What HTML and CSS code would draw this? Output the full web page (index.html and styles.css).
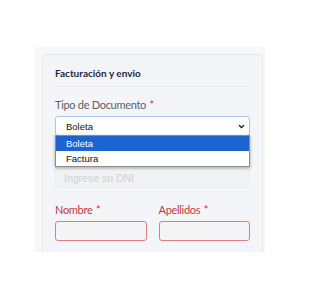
FILE: index.html
```html
<!DOCTYPE html>
<html lang="es">
<head>
<meta charset="utf-8">
<link rel="stylesheet" href="styles.css">
</head>
<body>
<div class="wrap">
  <div class="card">
    <h3 class="title">Facturación y envio</h3>
    <hr class="divider">
    <label class="label">Tipo de Documento <span class="req">*</span></label>
    <div class="select-box">
      <div class="select">
        <span>Boleta</span>
        <svg class="chev" width="7" height="5" viewBox="0 0 7 5"><path d="M1 1.2 L3.5 3.6 L6 1.2" fill="none" stroke="#222" stroke-width="1.4"/></svg>
      </div>
      <ul class="menu">
        <li class="opt active">Boleta</li>
        <li class="opt">Factura</li>
      </ul>
    </div>
    <div class="input disabled">Ingrese su DNI</div>
    <div class="row">
      <div class="col">
        <label class="label err">Nombre <span class="req">*</span></label>
        <div class="input invalid"></div>
      </div>
      <div class="col">
        <label class="label err">Apellidos <span class="req">*</span></label>
        <div class="input invalid"></div>
      </div>
    </div>
  </div>
</div>
</body>
</html>
```
FILE: styles.css
```css
html, body { margin: 0; padding: 0; background: #fff; }
body { font-family: "Lato", "Open Sans", sans-serif; }
.wrap {
  margin: 47px 0 0 35px;
  width: 230px;
  height: 205px;
  background: #f6f7f9;
  padding: 7px 0 0 7px;
  box-sizing: border-box;
  overflow: hidden;
}
.card {
  width: 221px;
  box-sizing: border-box;
  border: 1px solid #e4e6ec;
  border-radius: 4px;
  background: #f4f5f9;
  padding: 11px 12px 20px 12px;
  height: 230px;
}
.title {
  margin: 0;
  font-size: 10px;
  line-height: 14px;
  font-weight: 700;
  color: #1d2742;
}
.divider {
  border: 0;
  border-top: 1px solid #e3e5ea;
  margin: 6px 0 0 0;
}
.label {
  display: block;
  font-size: 11px;
  line-height: 16px;
  letter-spacing: -0.3px;
  color: #5d5f66;
  margin-top: 10px;
}
.req { color: #e3262c; letter-spacing: 0; margin-left: 1px; }
.label.err { color: #c0393d; }
.select-box { position: relative; margin-top: 3px; }
.select {
  height: 20px;
  box-sizing: border-box;
  border: 1px solid #a9c6ee;
  border-radius: 3px;
  background: #fff;
  display: flex;
  align-items: center;
  justify-content: space-between;
  padding: 0 4px 0 10px;
  font-family: "Liberation Sans", Arial, sans-serif;
  font-size: 9.5px;
  color: #111;
}
.chev { margin-top: 1px; }
.menu {
  position: absolute;
  left: 0;
  right: 0;
  top: 19px;
  margin: 0;
  padding: 0;
  list-style: none;
  background: #fff;
  border: 1px solid #8d8d8d;
  box-shadow: 0 1px 3px rgba(0,0,0,0.35);
  font-family: "Liberation Sans", Arial, sans-serif;
  font-size: 9.5px;
  z-index: 2;
}
.opt {
  height: 15px;
  line-height: 15px;
  padding-left: 10px;
  color: #111;
}
.opt.active { background: #1c65d1; color: #fff; }
.input {
  height: 20px;
  box-sizing: border-box;
  border-radius: 3px;
}
.disabled {
  margin-top: 32px;
  border: 1px solid #ecedf0;
  background: #f1f2f4;
  color: #d0d0d3;
  font-family: "Liberation Sans", Arial, sans-serif;
  font-size: 10.5px;
  line-height: 18px;
  padding-left: 8px;
}
.row {
  display: flex;
  gap: 12px;
  margin-top: 2px;
}
.col { flex: 1; }
.col .label { margin-top: 12px; margin-bottom: 3px; }
.invalid {
  border: 1px solid #dd7f80;
  background: #f5f5f7;
}
```
